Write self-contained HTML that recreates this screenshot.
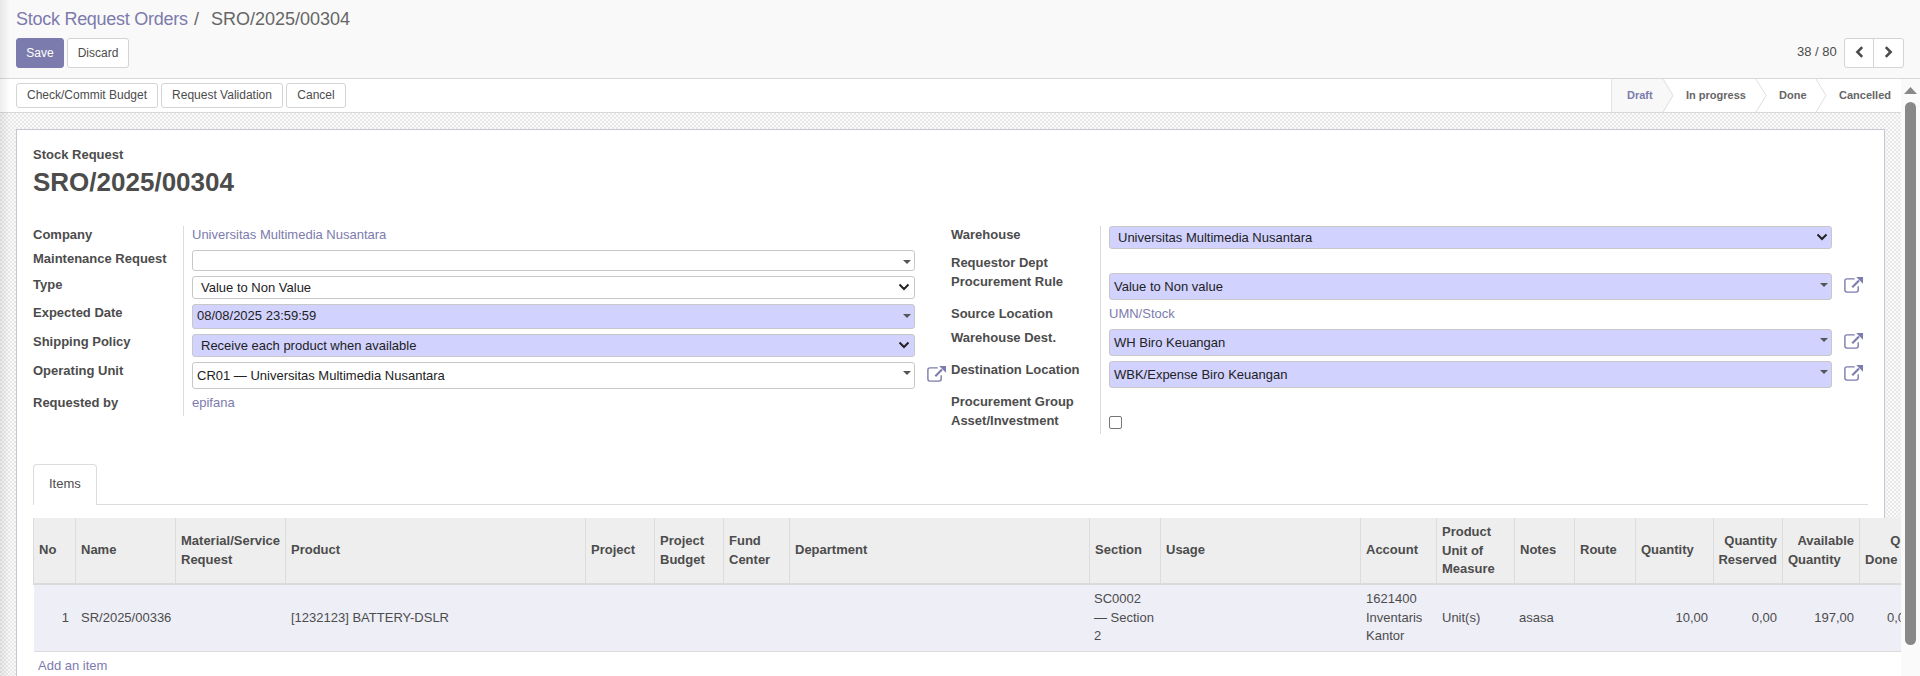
<!DOCTYPE html>
<html><head><meta charset="utf-8">
<style>
*{box-sizing:border-box;margin:0;padding:0}
html,body{width:1920px;height:676px;overflow:hidden;background:#fff}
body{font-family:"Liberation Sans",sans-serif;font-size:13px;color:#4c4c4c;position:relative}
div,span{position:absolute;white-space:nowrap}
#cp{left:0;top:0;width:1920px;height:79px;background:#f9f9f9;border-bottom:1px solid #d8d8d8}
#lshadow{left:0;top:0;width:10px;height:676px;background:linear-gradient(to right,rgba(0,0,0,.07),rgba(0,0,0,0))}
.bc{top:8px;font-size:18px;line-height:22px}
.btn{border:1px solid #d4d4d4;background:#fff;border-radius:3px;font-size:12px;line-height:14px;color:#4c4c4c;text-align:center}
#save{left:16px;top:38px;width:48px;height:30px;background:#7c7bad;border-color:#7c7bad;color:#fff;padding-top:7px}
#discard{left:67px;top:38px;width:62px;height:30px;padding-top:7px}
#pager{left:1797px;top:44px;font-size:13px;line-height:15px;color:#4c4c4c}
#sb{left:0;top:79px;width:1901px;height:34px;background:#fff;border-bottom:1px solid #d8d8d8}
.sbb{top:83px;height:25px;padding-top:4px}
.stage{top:88px;font-size:11px;line-height:15px;font-weight:bold;color:#666}
#bg{left:0;top:113px;width:1901px;height:563px;background:conic-gradient(#e8e8e8 25%,#fafafa 0 50%,#e8e8e8 0 75%,#fafafa 0) 0 0/4px 4px}
#sheet{left:16px;top:129px;width:1869px;height:560px;background:#fff;border:1px solid #c8c8d4}
.lbl{font-weight:bold;font-size:13px;line-height:15px;color:#4c4c4c}
.val{font-size:13px;line-height:15px;color:#7c7bad}
.inp{border:1px solid #c8c8c8;border-radius:3px;background:#fff}
.req{background:#d2d2ff}
.itxt{font-size:13px;line-height:15px;color:#222}
.caret{width:0;height:0;border-left:4px solid transparent;border-right:4px solid transparent;border-top:4px solid #555}
.chev{width:12px;height:8px}
.vsep{width:1px;background:#dcdcdc}
.ext{width:21px;height:18px}
.th{font-weight:bold;font-size:13px;line-height:18.5px;color:#4c4c4c}
.td{font-size:13px;line-height:18.5px;color:#4c4c4c}
.cdiv{top:518px;width:1px;height:65px;background:#dcdcdc}
#scroll{left:1901px;top:79px;width:19px;height:597px;background:#fafafa}
</style></head><body>
<!-- control panel -->
<div id="cp"></div>
<div class="bc" style="left:16px;color:#7c7bad;letter-spacing:-0.27px">Stock Request Orders</div>
<div class="bc" style="left:194px;color:#666">/</div>
<div class="bc" style="left:211px;color:#666">SRO/2025/00304</div>
<div id="save" class="btn">Save</div>
<div id="discard" class="btn">Discard</div>
<div id="pager">38 / 80</div>
<div class="btn" style="left:1844px;top:38px;width:60px;height:30px;border-radius:3px"></div>
<div style="left:1873px;top:39px;width:1px;height:28px;background:#d4d4d4"></div>
<svg style="position:absolute;left:1855px;top:46px" width="9" height="12" viewBox="0 0 9 12"><path d="M7.2 1.2 L2.4 6 L7.2 10.8" fill="none" stroke="#4c4c4c" stroke-width="2.6" stroke-linecap="butt"/></svg>
<svg style="position:absolute;left:1884px;top:46px" width="9" height="12" viewBox="0 0 9 12"><path d="M1.8 1.2 L6.6 6 L1.8 10.8" fill="none" stroke="#4c4c4c" stroke-width="2.6" stroke-linecap="butt"/></svg>

<!-- statusbar -->
<div id="sb"></div>
<div class="btn sbb" style="left:16px;width:142px">Check/Commit Budget</div>
<div class="btn sbb" style="left:161px;width:122px">Request Validation</div>
<div class="btn sbb" style="left:286px;width:60px">Cancel</div>
<svg style="position:absolute;left:1611px;top:79px" width="290" height="33" viewBox="0 0 290 33">
 <path d="M0.5 0 L52 0 L62 16.5 L52 33 L0.5 33 Z" fill="#f8f8f8"/>
 <path d="M0.5 0 V33" stroke="#e4e4e4" stroke-width="1"/>
 <path d="M52 0 L62 16.5 L52 33" fill="none" stroke="#dedede" stroke-width="1"/>
 <path d="M145 0 L155 16.5 L145 33" fill="none" stroke="#dedede" stroke-width="1"/>
 <path d="M205 0 L215 16.5 L205 33" fill="none" stroke="#dedede" stroke-width="1"/>
</svg>
<div class="stage" style="left:1627px;color:#7c7bad">Draft</div>
<div class="stage" style="left:1686px">In progress</div>
<div class="stage" style="left:1779px">Done</div>
<div class="stage" style="left:1839px">Cancelled</div>

<!-- sheet -->
<div id="bg"></div>
<div id="sheet"></div>

<div class="lbl" style="left:33px;top:147px">Stock Request</div>
<div style="left:33px;top:167px;font-size:26px;line-height:30px;font-weight:bold;color:#4c4c4c">SRO/2025/00304</div>

<!-- left group -->
<div class="vsep" style="left:183px;top:226px;height:190px"></div>
<div class="lbl" style="left:33px;top:227px">Company</div>
<div class="lbl" style="left:33px;top:251px">Maintenance Request</div>
<div class="lbl" style="left:33px;top:277px">Type</div>
<div class="lbl" style="left:33px;top:305px">Expected Date</div>
<div class="lbl" style="left:33px;top:334px">Shipping Policy</div>
<div class="lbl" style="left:33px;top:363px">Operating Unit</div>
<div class="lbl" style="left:33px;top:395px">Requested by</div>

<div class="val" style="left:192px;top:227px">Universitas Multimedia Nusantara</div>
<div class="inp" style="left:192px;top:250px;width:723px;height:21px"></div>
<div class="caret" style="left:903px;top:260px"></div>
<div class="inp" style="left:192px;top:276px;width:723px;height:23px"></div>
<div class="itxt" style="left:201px;top:280px">Value to Non Value</div>
<svg class="chev" style="position:absolute;left:898px;top:283px" width="12" height="8" viewBox="0 0 12 8"><path d="M1.5 1.5 L6 6 L10.5 1.5" fill="none" stroke="#222" stroke-width="2"/></svg>
<div class="inp req" style="left:192px;top:304px;width:723px;height:25px"></div>
<div class="itxt" style="left:197px;top:308px">08/08/2025 23:59:59</div>
<div class="caret" style="left:903px;top:314px"></div>
<div class="inp req" style="left:192px;top:334px;width:723px;height:23px"></div>
<div class="itxt" style="left:201px;top:338px">Receive each product when available</div>
<svg class="chev" style="position:absolute;left:898px;top:341px" width="12" height="8" viewBox="0 0 12 8"><path d="M1.5 1.5 L6 6 L10.5 1.5" fill="none" stroke="#222" stroke-width="2"/></svg>
<div class="inp" style="left:192px;top:362px;width:723px;height:27px"></div>
<div class="itxt" style="left:197px;top:368px">CR01 — Universitas Multimedia Nusantara</div>
<div class="caret" style="left:903px;top:371px"></div>
<svg class="ext" style="position:absolute;left:926px;top:365px" width="21" height="18" viewBox="0 0 21 18"><path d="M11.7 2.9 H4 Q1.9 2.9 1.9 5 V14 Q1.9 16.1 4 16.1 H13 Q15.2 16.1 15.2 14 V10.2" fill="none" stroke="#7c7bad" stroke-width="1.4"/><path d="M9.3 11.2 L16 4.5" fill="none" stroke="#7c7bad" stroke-width="2.1"/><path d="M13.2 0.9 H20 V7.7 Z" fill="#7c7bad"/></svg>
<div class="val" style="left:192px;top:395px">epifana</div>

<!-- right group -->
<div class="vsep" style="left:1100px;top:226px;height:208px"></div>
<div class="lbl" style="left:951px;top:227px">Warehouse</div>
<div class="lbl" style="left:951px;top:255px">Requestor Dept</div>
<div class="lbl" style="left:951px;top:274px">Procurement Rule</div>
<div class="lbl" style="left:951px;top:306px">Source Location</div>
<div class="lbl" style="left:951px;top:330px">Warehouse Dest.</div>
<div class="lbl" style="left:951px;top:362px">Destination Location</div>
<div class="lbl" style="left:951px;top:394px">Procurement Group</div>
<div class="lbl" style="left:951px;top:413px">Asset/Investment</div>

<div class="inp req" style="left:1109px;top:226px;width:723px;height:23px"></div>
<div class="itxt" style="left:1118px;top:230px">Universitas Multimedia Nusantara</div>
<svg class="chev" style="position:absolute;left:1816px;top:233px" width="12" height="8" viewBox="0 0 12 8"><path d="M1.5 1.5 L6 6 L10.5 1.5" fill="none" stroke="#222" stroke-width="2"/></svg>
<div class="inp req" style="left:1109px;top:273px;width:723px;height:27px"></div>
<div class="itxt" style="left:1114px;top:279px">Value to Non value</div>
<div class="caret" style="left:1820px;top:283px"></div>
<svg class="ext" style="position:absolute;left:1843px;top:276px" width="21" height="18" viewBox="0 0 21 18"><path d="M11.7 2.9 H4 Q1.9 2.9 1.9 5 V14 Q1.9 16.1 4 16.1 H13 Q15.2 16.1 15.2 14 V10.2" fill="none" stroke="#7c7bad" stroke-width="1.4"/><path d="M9.3 11.2 L16 4.5" fill="none" stroke="#7c7bad" stroke-width="2.1"/><path d="M13.2 0.9 H20 V7.7 Z" fill="#7c7bad"/></svg>
<div class="val" style="left:1109px;top:306px">UMN/Stock</div>
<div class="inp req" style="left:1109px;top:329px;width:723px;height:27px"></div>
<div class="itxt" style="left:1114px;top:335px">WH Biro Keuangan</div>
<div class="caret" style="left:1820px;top:338px"></div>
<svg class="ext" style="position:absolute;left:1843px;top:332px" width="21" height="18" viewBox="0 0 21 18"><path d="M11.7 2.9 H4 Q1.9 2.9 1.9 5 V14 Q1.9 16.1 4 16.1 H13 Q15.2 16.1 15.2 14 V10.2" fill="none" stroke="#7c7bad" stroke-width="1.4"/><path d="M9.3 11.2 L16 4.5" fill="none" stroke="#7c7bad" stroke-width="2.1"/><path d="M13.2 0.9 H20 V7.7 Z" fill="#7c7bad"/></svg>
<div class="inp req" style="left:1109px;top:361px;width:723px;height:27px"></div>
<div class="itxt" style="left:1114px;top:367px">WBK/Expense Biro Keuangan</div>
<div class="caret" style="left:1820px;top:370px"></div>
<svg class="ext" style="position:absolute;left:1843px;top:364px" width="21" height="18" viewBox="0 0 21 18"><path d="M11.7 2.9 H4 Q1.9 2.9 1.9 5 V14 Q1.9 16.1 4 16.1 H13 Q15.2 16.1 15.2 14 V10.2" fill="none" stroke="#7c7bad" stroke-width="1.4"/><path d="M9.3 11.2 L16 4.5" fill="none" stroke="#7c7bad" stroke-width="2.1"/><path d="M13.2 0.9 H20 V7.7 Z" fill="#7c7bad"/></svg>
<div style="left:1109px;top:416px;width:13px;height:13px;border:1px solid #767676;border-radius:2px;background:#fff"></div>

<!-- notebook -->
<div style="left:96px;top:504px;width:1772px;height:1px;background:#dcdcdc"></div>
<div style="left:33px;top:464px;width:64px;height:41px;border:1px solid #dcdcdc;border-bottom:none;border-radius:4px 4px 0 0;background:#fff"></div>
<div style="left:49px;top:476px;font-size:13px;line-height:15px;color:#4c4c4c">Items</div>

<!-- table -->
<div style="left:33px;top:518px;width:1868px;height:67px;background:#eee;border-bottom:2px solid #dadada;border-left:1px solid #dcdcdc"></div>
<div style="left:34px;top:585px;width:1867px;height:67px;background:#eeeef7;border-bottom:1px solid #dcdcdc"></div>
<div class="cdiv" style="left:75px"></div>
<div class="cdiv" style="left:175px"></div>
<div class="cdiv" style="left:285px"></div>
<div class="cdiv" style="left:585px"></div>
<div class="cdiv" style="left:654px"></div>
<div class="cdiv" style="left:723px"></div>
<div class="cdiv" style="left:789px"></div>
<div class="cdiv" style="left:1089px"></div>
<div class="cdiv" style="left:1160px"></div>
<div class="cdiv" style="left:1360px"></div>
<div class="cdiv" style="left:1436px"></div>
<div class="cdiv" style="left:1514px"></div>
<div class="cdiv" style="left:1574px"></div>
<div class="cdiv" style="left:1635px"></div>
<div class="cdiv" style="left:1713px"></div>
<div class="cdiv" style="left:1782px"></div>
<div class="cdiv" style="left:1859px"></div>

<div class="th" style="left:39px;top:541px">No</div>
<div class="th" style="left:81px;top:541px">Name</div>
<div class="th" style="left:181px;top:532px">Material/Service<br>Request</div>
<div class="th" style="left:291px;top:541px">Product</div>
<div class="th" style="left:591px;top:541px">Project</div>
<div class="th" style="left:660px;top:532px">Project<br>Budget</div>
<div class="th" style="left:729px;top:532px">Fund<br>Center</div>
<div class="th" style="left:795px;top:541px">Department</div>
<div class="th" style="left:1095px;top:541px">Section</div>
<div class="th" style="left:1166px;top:541px">Usage</div>
<div class="th" style="left:1366px;top:541px">Account</div>
<div class="th" style="left:1442px;top:523px">Product<br>Unit of<br>Measure</div>
<div class="th" style="left:1520px;top:541px">Notes</div>
<div class="th" style="left:1580px;top:541px">Route</div>
<div class="th" style="left:1641px;top:541px">Quantity</div>
<div class="th" style="left:1719px;top:532px;width:58px;text-align:right">Quantity<br><span style="position:static;margin-left:-2px">Reserved</span></div>
<div class="th" style="left:1788px;top:532px;width:66px;text-align:right">Available<br>Quantity&#8199;&#8199;</div>
<div class="th" style="left:1865px;top:532px;width:78px;text-align:right;overflow:visible">Quantity<br><span style="position:static;float:left">Done</span></div>

<div class="td" style="left:39px;top:609px;width:30px;text-align:right">1</div>
<div class="td" style="left:81px;top:609px">SR/2025/00336</div>
<div class="td" style="left:291px;top:609px">[1232123] BATTERY-DSLR</div>
<div class="td" style="left:1094px;top:590px">SC0002<br>— Section<br>2</div>
<div class="td" style="left:1366px;top:590px">1621400<br>Inventaris<br>Kantor</div>
<div class="td" style="left:1442px;top:609px">Unit(s)</div>
<div class="td" style="left:1519px;top:609px">asasa</div>
<div class="td" style="left:1641px;top:609px;width:67px;text-align:right">10,00</div>
<div class="td" style="left:1719px;top:609px;width:58px;text-align:right">0,00</div>
<div class="td" style="left:1788px;top:609px;width:66px;text-align:right">197,00</div>
<div class="td" style="left:1887px;top:609px">0,00</div>

<div style="left:1884px;top:652px;width:17px;height:24px;background:#fff"></div>
<div style="left:38px;top:658px;font-size:13px;line-height:15px;color:#7c7bad">Add an item</div>

<!-- scrollbar -->
<div id="scroll"></div>
<svg style="position:absolute;left:1901px;top:79px" width="19" height="597" viewBox="0 0 19 597"><path d="M3 15 L9.5 8 L16 15 Z" fill="#888"/><rect x="4" y="23" width="11" height="543" rx="5.5" fill="#888"/></svg>
<div id="lshadow"></div>
</body></html>
